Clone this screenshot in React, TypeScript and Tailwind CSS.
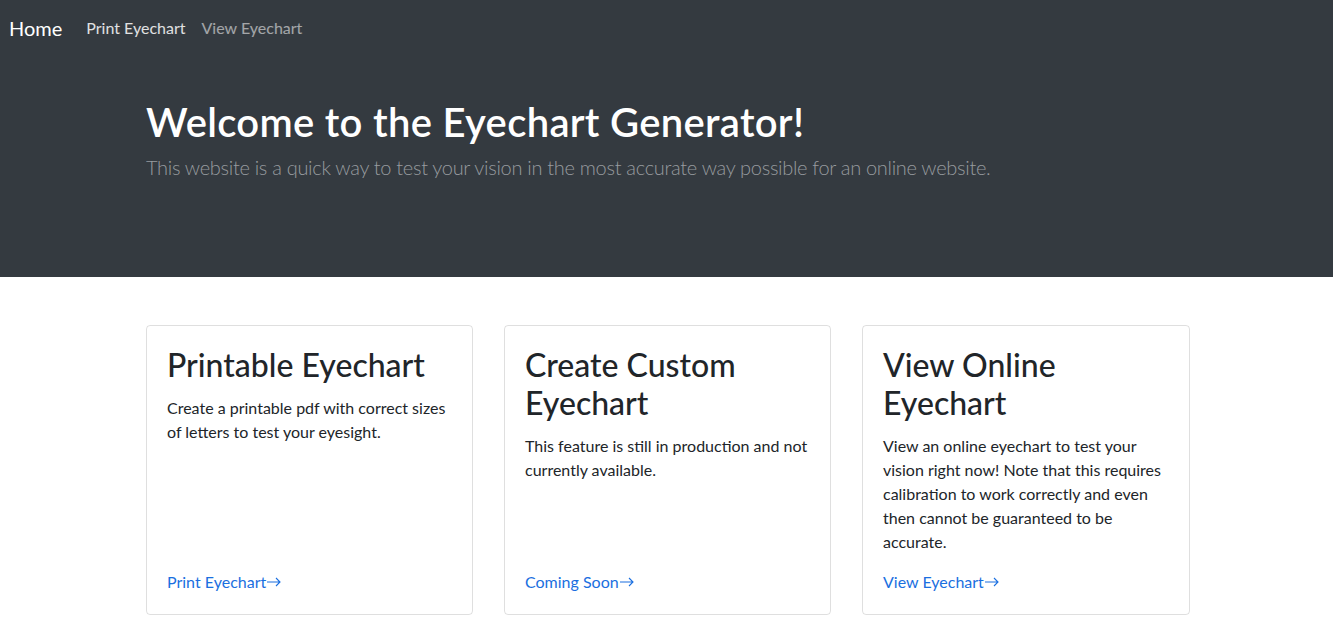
const FONT = "font-['Lato','Noto_Sans',sans-serif]";

const cards = [
  {
    title: 'Printable Eyechart',
    text: 'Create a printable pdf with correct sizes of letters to test your eyesight.',
    link: 'Print Eyechart',
  },
  {
    title: 'Create Custom Eyechart',
    text: 'This feature is still in production and not currently available.',
    link: 'Coming Soon',
  },
  {
    title: 'View Online Eyechart',
    text: 'View an online eyechart to test your vision right now! Note that this requires calibration to work correctly and even then cannot be guaranteed to be accurate.',
    link: 'View Eyechart',
  },
];

function Arrow() {
  return (
    <svg width="15" height="10" viewBox="0 0 15 10" className="ml-[1px] inline-block align-[1px]">
      <path d="M0 5h13M9 1l4 4-4 4" fill="none" stroke="currentColor" strokeWidth="1.1" />
    </svg>
  );
}

export default function App() {
  return (
    <div className={`${FONT} min-h-[620px] bg-white text-[#212529]`}>
      {/* Navbar */}
      <nav className="flex h-14 items-center bg-[#343a40] pl-[9px]">
        <a className="mr-6 text-[20px] leading-[30px] text-white">Home</a>
        <a className="mr-4 text-[16px] text-white/85">Print Eyechart</a>
        <a className="text-[16px] text-white/55">View Eyechart</a>
      </nav>

      {/* Hero */}
      <header className="h-[221px] bg-[#343a40] pl-[146px] pt-[42px]">
        <h1 className="text-[40px] font-semibold leading-[48px] tracking-[0.3px] text-white">
          Welcome to the Eyechart Generator!
        </h1>
        <p className="mt-[6px] text-[20px] font-light leading-[30px] tracking-[-0.3px] text-[#979b9f]">
          This website is a quick way to test your vision in the most accurate way possible for an
          online website.
        </p>
      </header>

      {/* Cards */}
      <main className="grid grid-cols-[327px_327px_328px] gap-[31px] pl-[146px] pt-12">
        {cards.map((c) => (
          <div
            key={c.title}
            className="flex h-[290px] flex-col rounded-[4px] border border-black/[0.125] p-5"
          >
            <h2 className="mb-3 text-[32px] font-medium leading-[38px]">{c.title}</h2>
            <p className="mb-4 text-[16px] leading-6">{c.text}</p>
            <a className="mt-auto text-[16px] leading-6 text-[#1a6fe0]">
              {c.link}
              <Arrow />
            </a>
          </div>
        ))}
      </main>
    </div>
  );
}
